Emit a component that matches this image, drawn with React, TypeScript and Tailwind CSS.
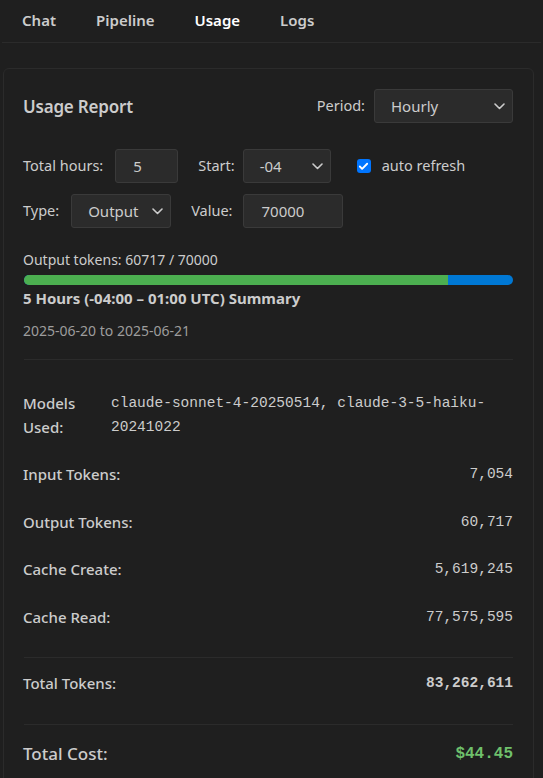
import { Check } from "lucide-react";

const TABS = ["Chat", "Pipeline", "Usage", "Logs"];

const ROWS = [
  { label: "Input Tokens:", value: "7,054" },
  { label: "Output Tokens:", value: "60,717" },
  { label: "Cache Create:", value: "5,619,245" },
  { label: "Cache Read:", value: "77,575,595" },
];

function Chevron() {
  return (
    <svg width="11" height="7" viewBox="0 0 11 7" fill="none">
      <path
        d="M1 1l4.5 4.5L10 1"
        stroke="#cccccc"
        strokeWidth="1.6"
        strokeLinecap="round"
        strokeLinejoin="round"
      />
    </svg>
  );
}

function Select({ value, width }: { value: string; width: string }) {
  return (
    <div
      className={`flex h-[34px] ${width} items-center justify-between rounded-[3px] border border-[#3a3a3a] bg-[#2b2b2b] pl-4 pr-[7px] text-[15px] text-[#cccccc]`}
    >
      <span>{value}</span>
      <Chevron />
    </div>
  );
}

function Input({ value, width }: { value: string; width: string }) {
  return (
    <div
      className={`flex h-[34px] ${width} items-center rounded-[3px] border border-[#3a3a3a] bg-[#2b2b2b] pl-[17px] text-[15px] text-[#cccccc]`}
    >
      {value}
    </div>
  );
}

export default function App() {
  const used = 60717;
  const limit = 70000;
  const pct = (used / limit) * 100;

  return (
    <div className="min-h-screen bg-[#1f1f1f] font-['Segoe_UI','Noto_Sans',sans-serif] text-[#cccccc]">
      {/* Tabs */}
      <nav className="mx-[2px] flex h-[43px] items-center border-b border-[#2b2b2b] pb-[2px] text-[15px] font-semibold">
        {TABS.map((tab) => (
          <div
            key={tab}
            className={`px-5 ${tab === "Usage" ? "text-white" : "text-[#cccccc]"}`}
          >
            {tab}
          </div>
        ))}
      </nav>

      <section className="ml-[3px] mr-[9px] mt-[25px] rounded-[6px] border border-[#2b2b2b] bg-[#1f1f1f] pb-4 pl-[19px] pr-5 pt-5">
        {/* Header */}
        <div className="flex items-center justify-between">
          <h2 className="mt-[2px] text-[17px] font-semibold tracking-[-0.2px] text-[#cccccc]">
            Usage Report
          </h2>
          <div className="flex items-center gap-[9px] text-[14.5px]">
            <span>Period:</span>
            <Select value="Hourly" width="w-[139px]" />
          </div>
        </div>

        {/* Controls */}
        <div className="mt-[26px] flex items-center text-[14.5px]">
          <span>Total hours:</span>
          <div className="ml-[12px]">
            <Input value="5" width="w-[63px]" />
          </div>
          <span className="ml-5">Start:</span>
          <div className="ml-[8px]">
            <Select value="-04" width="w-[88px]" />
          </div>
          <div className="ml-[26px] flex items-center gap-[11px]">
            <span className="flex h-[14px] w-[14px] items-center justify-center rounded-[3px] bg-[#0075ff]">
              <Check className="h-[11px] w-[11px] text-white" strokeWidth={4} />
            </span>
            <span>auto refresh</span>
          </div>
        </div>
        <div className="mt-[11px] flex items-center text-[14.5px]">
          <span>Type:</span>
          <div className="ml-[12px]">
            <Select value="Output" width="w-[100px]" />
          </div>
          <span className="ml-5">Value:</span>
          <div className="ml-[11px]">
            <Input value="70000" width="w-[100px]" />
          </div>
        </div>

        {/* Progress */}
        <div className="mt-[22px] text-[14px] leading-5">
          Output tokens: {used} / {limit}
        </div>
        <div className="mt-[5px] ml-px h-[10px] overflow-hidden rounded-full bg-[#0078d4]">
          <div className="h-full bg-[#4caf50]" style={{ width: `${pct}%` }} />
        </div>

        <div className="mt-[3px] text-[15px] font-bold leading-5">
          5 Hours (-04:00 – 01:00 UTC) Summary
        </div>
        <div className="mt-[13px] text-[14px] leading-5 text-[#9d9d9d]">
          2025-06-20 to 2025-06-21
        </div>

        <div className="ml-px mt-[18px] border-t border-[#2b2b2b]" />

        {/* Details */}
        <div className="pt-5 text-[15px] leading-[23.5px]">
          <div className="flex py-3">
            <span className="w-[88px] shrink-0 font-medium">Models Used:</span>
            <span className="font-['Liberation_Mono',monospace] text-[14.5px]">
              claude-sonnet-4-20250514, claude-3-5-haiku-
              <wbr />
              20241022
            </span>
          </div>
          {ROWS.map((row) => (
            <div key={row.label} className="flex items-center justify-between py-3">
              <span className="font-medium">{row.label}</span>
              <span className="font-['Liberation_Mono',monospace] text-[14.5px]">
                {row.value}
              </span>
            </div>
          ))}
        </div>

        <div className="ml-px mt-4 border-t border-[#2b2b2b]" />
        <div className="flex items-center justify-between pb-[13px] pt-[14px] text-[15px] leading-[23.5px]">
          <span className="font-medium">Total Tokens:</span>
          <span className="font-['Liberation_Mono',monospace] text-[14.5px] font-bold">
            83,262,611
          </span>
        </div>

        <div className="ml-px mt-[15px] border-t border-[#2b2b2b]" />
        <div className="flex items-center justify-between pt-4 leading-[26px]">
          <span className="text-[17px] font-medium">Total Cost:</span>
          <span className="font-['Liberation_Mono',monospace] text-[16px] font-bold text-[#6fc06c]">
            $44.45
          </span>
        </div>
      </section>
    </div>
  );
}
